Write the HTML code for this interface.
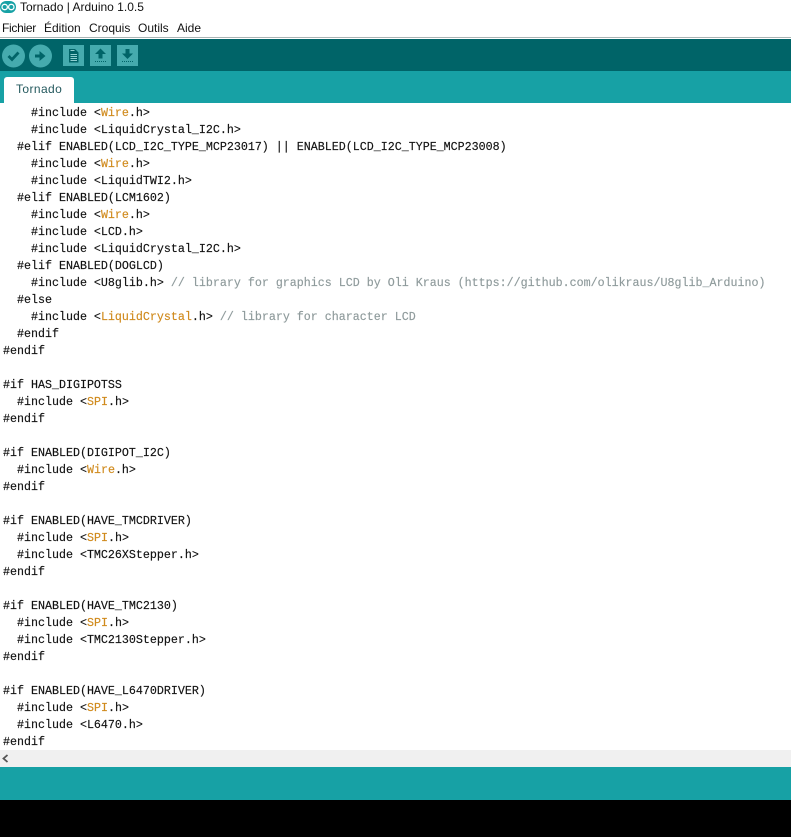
<!DOCTYPE html>
<html><head><meta charset="utf-8">
<style>
html,body{margin:0;padding:0;background:#fff}
#r{position:relative;width:791px;height:837px;overflow:hidden;background:#fff;font-family:"Liberation Sans",sans-serif}
.a{position:absolute}
pre{position:absolute;left:3px;top:105px;margin:0;font:11.665px/17px "Liberation Mono",monospace;color:#111;-webkit-text-stroke:0.15px #111}
pre b{font-weight:normal;color:#d08a1c;-webkit-text-stroke:0.15px #d08a1c}
pre i{font-style:normal;color:#8e9a9b;-webkit-text-stroke:0.15px #8e9a9b}
.t{position:absolute;font-size:12px;color:#111;white-space:nowrap;line-height:14px}
</style></head><body>
<div id="r">
<svg class="a" style="left:0;top:0" width="16" height="14" viewBox="0 0 16 14">
<rect x="0" y="1" width="16" height="12" rx="6" fill="#17a1a5"/>
<circle cx="4.7" cy="7" r="2.7" fill="none" stroke="#fff" stroke-width="1.3"/>
<circle cx="11.3" cy="7" r="2.7" fill="none" stroke="#fff" stroke-width="1.3"/>
</svg>
<div class="t" style="left:20px;top:0">Tornado | Arduino 1.0.5</div>
<div class="t" style="left:2px;top:21px;letter-spacing:-.3px">Fichier</div>
<div class="t" style="left:44px;top:21px">Édition</div>
<div class="t" style="left:89px;top:21px">Croquis</div>
<div class="t" style="left:138px;top:21px">Outils</div>
<div class="t" style="left:177px;top:21px">Aide</div>
<div class="a" style="left:0;top:37px;width:791px;height:1px;background:#a9b4b4"></div>
<div class="a" style="left:0;top:39px;width:791px;height:32px;background:#006468"></div>
<div class="a" style="left:0;top:71px;width:791px;height:32px;background:#17a1a5"></div>
<svg class="a" style="left:0;top:39px" width="145" height="32" viewBox="0 39 145 32">
<circle cx="13.5" cy="56" r="11.500" fill="#45abae"/>
<path d="M8.500 56l3.500 3.500 6.500-7" fill="none" stroke="#006468" stroke-width="2.800"/>
<circle cx="40.500" cy="56" r="11.500" fill="#45abae"/>
<path d="M35 54.500h4.500v-3.500l6 5-6 5v-3.500h-4.500z" fill="#006468"/>
<rect x="63" y="45" width="21" height="21" fill="#45abae"/>
<path d="M69 49h6l3.500 3.500v10h-9.500z" fill="#006468"/>
<path d="M70.500 54.500h6.500M70.500 56.500h6.500M70.500 58.500h6.500M70.500 60.500h6.500M70.500 50.500h4" fill="none" stroke="#8fd0d2" stroke-width=".9"/>
<rect x="90" y="45" width="21" height="21" fill="#45abae"/>
<path d="M100.500 48.500l5.500 5.500h-3.500v4.500h-4v-4.500h-3.500z" fill="#006468"/>
<path d="M95 61.500h11" stroke="#006468" stroke-dasharray="1 1"/>
<rect x="117" y="45" width="21" height="21" fill="#45abae"/>
<path d="M127.500 59l5.500-5.500h-3.500v-4.500h-4v4.500h-3.500z" fill="#006468"/>
<path d="M122 61.500h11" stroke="#006468" stroke-dasharray="1 1"/>
</svg>
<div class="a" style="left:4px;top:77px;width:70px;height:26px;background:#fff;border-radius:3px 3px 0 0"></div>
<div class="t" style="left:16px;top:82px;color:#24595e;letter-spacing:.4px">Tornado</div>
<pre>    #include &lt;<b>Wire</b>.h&gt;
    #include &lt;LiquidCrystal_I2C.h&gt;
  #elif ENABLED(LCD_I2C_TYPE_MCP23017) || ENABLED(LCD_I2C_TYPE_MCP23008)
    #include &lt;<b>Wire</b>.h&gt;
    #include &lt;LiquidTWI2.h&gt;
  #elif ENABLED(LCM1602)
    #include &lt;<b>Wire</b>.h&gt;
    #include &lt;LCD.h&gt;
    #include &lt;LiquidCrystal_I2C.h&gt;
  #elif ENABLED(DOGLCD)
    #include &lt;U8glib.h&gt; <i>// library for graphics LCD by Oli Kraus (https://github.com/olikraus/U8glib_Arduino)</i>
  #else
    #include &lt;<b>LiquidCrystal</b>.h&gt; <i>// library for character LCD</i>
  #endif
#endif

#if HAS_DIGIPOTSS
  #include &lt;<b>SPI</b>.h&gt;
#endif

#if ENABLED(DIGIPOT_I2C)
  #include &lt;<b>Wire</b>.h&gt;
#endif

#if ENABLED(HAVE_TMCDRIVER)
  #include &lt;<b>SPI</b>.h&gt;
  #include &lt;TMC26XStepper.h&gt;
#endif

#if ENABLED(HAVE_TMC2130)
  #include &lt;<b>SPI</b>.h&gt;
  #include &lt;TMC2130Stepper.h&gt;
#endif

#if ENABLED(HAVE_L6470DRIVER)
  #include &lt;<b>SPI</b>.h&gt;
  #include &lt;L6470.h&gt;
#endif</pre>
<div class="a" style="left:0;top:750px;width:791px;height:17px;background:#f0f0f0"></div>
<svg class="a" style="left:2px;top:754px" width="7" height="9" viewBox="0 0 7 9"><path d="M5.500 1L1.500 4.500l4 3.500" fill="none" stroke="#555" stroke-width="1.800"/></svg>
<div class="a" style="left:0;top:767px;width:791px;height:33px;background:#17a1a5"></div>
<div class="a" style="left:0;top:800px;width:791px;height:37px;background:#000"></div>
</div>
</body></html>
